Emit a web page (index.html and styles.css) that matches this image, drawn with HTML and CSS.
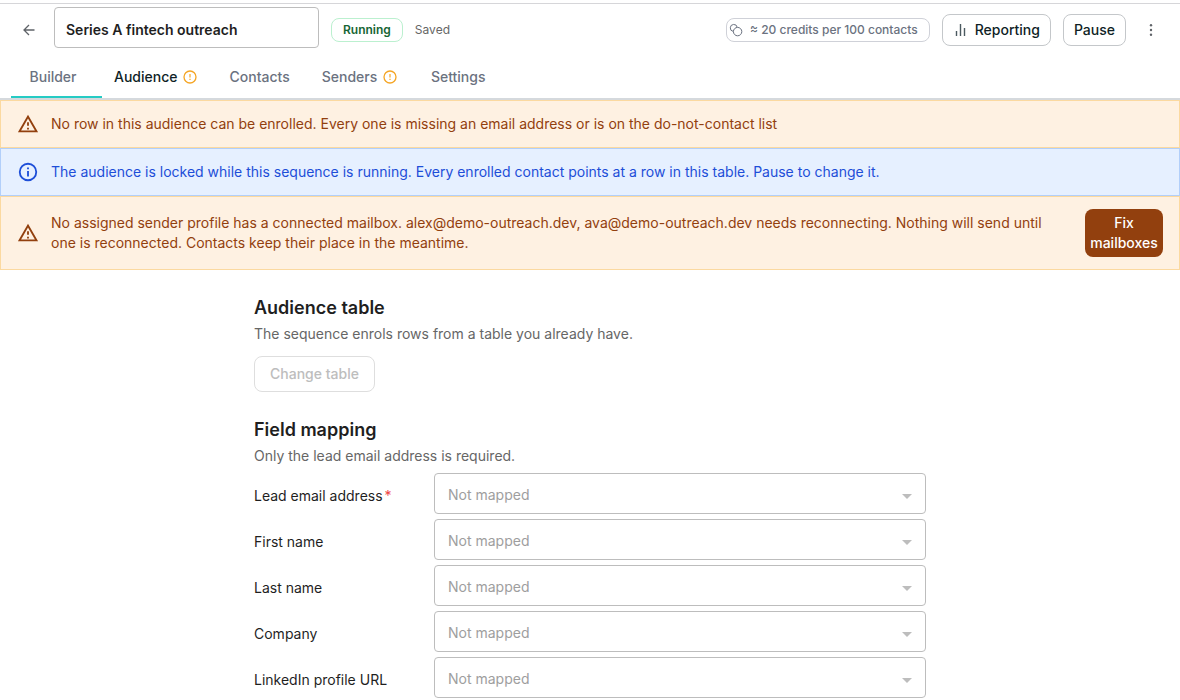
FILE: index.html
```html
<!DOCTYPE html>
<html lang="en">
<head>
<meta charset="utf-8">
<meta name="viewport" content="width=device-width, initial-scale=1">
<title>Series A fintech outreach</title>
<link rel="stylesheet" href="styles.css">
</head>
<body>
<svg class="sprite" aria-hidden="true">
  <symbol id="alert-circle" viewBox="0 0 16 16"><circle cx="8" cy="8" r="6" fill="none" stroke="currentColor" stroke-width="1.3"/><path d="M8 5v3.6M8 9.8v1.3" fill="none" stroke="currentColor" stroke-width="1.2"/></symbol>
  <symbol id="warning" viewBox="0 0 24 24"><path fill="currentColor" d="M12 5.99 19.53 19H4.47L12 5.99M12 2 1 21h22L12 2zm1 14h-2v2h2v-2zm0-6h-2v4h2v-4z"/></symbol>
  <symbol id="caret" viewBox="0 0 24 24"><path fill="currentColor" d="m7 10 5 5 5-5z"/></symbol>
</svg>
<div class="page">
  <header class="topbar">
    <button class="icon-button" type="button" aria-label="Back">
      <svg class="icon-small" viewBox="0 0 16 16"><path d="M13.5 8H3M8 3 3 8l5 5" fill="none" stroke="currentColor" stroke-width="1.3"/></svg>
    </button>
    <input class="title-input" type="text" aria-label="Sequence name" value="Series A fintech outreach">
    <span class="chip chip-running">Running</span>
    <span class="saved">Saved</span>
    <div class="actions">
      <span class="chip chip-credits">
        <svg class="coins" viewBox="0 0 14 14"><g fill="none" stroke="currentColor"><path d="M4.2 8.4A3.5 3.5 0 1 1 8.2 4.2"/><circle cx="8.6" cy="8.6" r="4.2"/></g></svg>
        ≈ 20 credits per 100 contacts
      </span>
      <button class="button" type="button">
        <svg class="icon-small bars" viewBox="0 0 16 16"><path d="M3.5 9v5M7.5 2v12M11.5 6v8" fill="none" stroke="currentColor" stroke-width="1.4"/></svg>
        Reporting
      </button>
      <button class="button" type="button">Pause</button>
      <button class="icon-button" type="button" aria-label="More actions">
        <svg class="icon-small" viewBox="0 0 16 16" fill="currentColor"><circle cx="8" cy="3.3" r="1.2"/><circle cx="8" cy="8" r="1.2"/><circle cx="8" cy="12.7" r="1.2"/></svg>
      </button>
    </div>
  </header>

  <nav class="tabs" role="tablist" aria-label="Sequence sections">
    <button class="tab" role="tab" type="button">Builder</button>
    <button class="tab tab-active" role="tab" type="button" aria-selected="true">Audience <svg class="tab-icon"><use href="#alert-circle"/></svg></button>
    <button class="tab" role="tab" type="button">Contacts</button>
    <button class="tab" role="tab" type="button">Senders <svg class="tab-icon"><use href="#alert-circle"/></svg></button>
    <button class="tab" role="tab" type="button">Settings</button>
    <span class="tab-indicator"></span>
  </nav>

  <div class="alert alert-warning" role="alert">
    <svg class="alert-icon"><use href="#warning"/></svg>
    <p class="alert-text">No row in this audience can be enrolled. Every one is missing an email address or is on the do-not-contact list</p>
  </div>
  <div class="alert alert-info" role="status">
    <svg class="alert-icon" viewBox="0 0 24 24"><path fill="currentColor" d="M11 7h2v2h-2zm0 4h2v6h-2zm1-9a10 10 0 1 0 0 20 10 10 0 0 0 0-20zm0 18a8 8 0 1 1 0-16 8 8 0 0 1 0 16z"/></svg>
    <p class="alert-text">The audience is locked while this sequence is running. Every enrolled contact points at a row in this table. Pause to change it.</p>
  </div>
  <div class="alert alert-warning alert-tall" role="alert">
    <svg class="alert-icon"><use href="#warning"/></svg>
    <p class="alert-text">No assigned sender profile has a connected mailbox. alex@demo-outreach.dev, ava@demo-outreach.dev needs reconnecting. Nothing will send until one is reconnected. Contacts keep their place in the meantime.</p>
    <button class="fix-button" type="button">Fix mailboxes</button>
  </div>

  <main class="content">
    <section class="section">
      <h2 class="heading">Audience table</h2>
      <p class="description">The sequence enrols rows from a table you already have.</p>
      <button class="button button-change" type="button" disabled>Change table</button>
    </section>
    <section class="section">
      <h2 class="heading">Field mapping</h2>
      <p class="description">Only the lead email address is required.</p>
      <div class="fields">
        <div class="field">
          <label class="label" for="email">Lead email address<span class="required">*</span></label>
          <div class="select-box"><select class="select" id="email" disabled><option>Not mapped</option></select><svg class="caret"><use href="#caret"/></svg></div>
        </div>
        <div class="field">
          <label class="label" for="first">First name</label>
          <div class="select-box"><select class="select" id="first" disabled><option>Not mapped</option></select><svg class="caret"><use href="#caret"/></svg></div>
        </div>
        <div class="field">
          <label class="label" for="last">Last name</label>
          <div class="select-box"><select class="select" id="last" disabled><option>Not mapped</option></select><svg class="caret"><use href="#caret"/></svg></div>
        </div>
        <div class="field">
          <label class="label" for="company">Company</label>
          <div class="select-box"><select class="select" id="company" disabled><option>Not mapped</option></select><svg class="caret"><use href="#caret"/></svg></div>
        </div>
        <div class="field">
          <label class="label" for="linkedin">LinkedIn profile URL</label>
          <div class="select-box"><select class="select" id="linkedin" disabled><option>Not mapped</option></select><svg class="caret"><use href="#caret"/></svg></div>
        </div>
      </div>
    </section>
  </main>
</div>
</body>
</html>
```
FILE: styles.css
```css
* { box-sizing: border-box; }
body {
  margin: 0;
  background: #fff;
  color: #1f1f1f;
  font-family: Inter, "Liberation Sans", sans-serif;
  font-size: 14px;
  line-height: 20px;
}
button, input, select { font: inherit; color: inherit; }
p, h2 { margin: 0; }
.sprite { display: none; }
.page { margin-top: 3px; border-top: 1px solid #d6d6d9; }

.topbar {
  display: flex;
  align-items: center;
  gap: 12px;
  padding: 7px 16px 8px;
}
.icon-button {
  display: flex;
  padding: 5px;
  border: 0;
  background: none;
  color: #5f6368;
}
.icon-small { width: 16px; height: 16px; }
.title-input {
  width: 265px;
  height: 41px;
  margin-top: -4px;
  padding: 4px 11px 0;
  border: 1px solid #bdbdbd;
  border-radius: 4px;
  background: #fff;
  font-weight: 600;
}
.chip {
  display: flex;
  align-items: center;
  height: 24px;
  border: 1px solid;
  border-radius: 8px;
  font-size: 12px;
  font-weight: 500;
}
.chip-running { padding: 0 11px; border-color: #bbf0cf; color: #166534; font-weight: 600; }
.chip-credits { gap: 7px; padding: 0 11px 0 2px; border-color: #cfd1d8; color: #6b7280; }
.coins { width: 14px; height: 14px; }
.saved { color: #666; font-size: 12px; }
.actions {
  display: flex;
  align-items: center;
  gap: 12px;
  margin-left: auto;
}
.button {
  display: flex;
  align-items: center;
  justify-content: center;
  gap: 6px;
  height: 32px;
  padding: 0 10px;
  border: 1px solid #c4c7ca;
  border-radius: 8px;
  background: #fff;
  color: #0f1f26;
  font-weight: 500;
}
.bars { color: #4b5960; }

.tabs {
  position: relative;
  display: flex;
  padding: 0 8px;
  border-bottom: 2px solid #d5d9dd;
}
.tab {
  display: flex;
  align-items: center;
  justify-content: center;
  gap: 5px;
  min-width: 90px;
  height: 42px;
  padding: 0 16px;
  border: 0;
  background: none;
  color: #6b7280;
  font-weight: 500;
}
.tab-active { color: #0f1f26; }
.tab-icon { width: 16px; height: 16px; margin-right: -1px; color: #f5a524; }
.tab-indicator {
  position: absolute;
  bottom: 0;
  left: 11px;
  width: 91px;
  height: 2px;
  background: #25cbc4;
}

.alert {
  display: flex;
  align-items: center;
  gap: 12px;
  min-height: 48px;
  padding: 0 16px;
  border: 1px solid;
}
.alert-warning { background: #fef1e2; border-color: #fbd9a0; color: #92400e; }
.alert-info { background: #e6f0ff; border-color: #b2cffa; color: #1d4ed8; }
.alert-tall { min-height: 74px; }
.alert-icon { flex: none; width: 22px; height: 22px; }
.alert-text { flex: 1; }
.fix-button {
  width: 78px;
  margin-left: 22px;
  padding: 4px;
  border: 0;
  border-radius: 8px;
  background: #92400e;
  color: #fff;
  font-weight: 500;
}

.content {
  display: grid;
  gap: 24px;
  max-width: 672px;
  margin: 24px auto 0;
}
.heading { font-size: 18px; font-weight: 600; line-height: 28px; }
.description { margin-top: 2px; color: #666; }
.button-change {
  height: 36px;
  margin-top: 12px;
  padding: 0 15px;
  border-color: #dedede;
  color: #bdbdbd;
}
.fields { display: grid; gap: 5px; margin-top: 7px; }
.field {
  display: grid;
  grid-template-columns: 180px 1fr;
  align-items: center;
}
.label { padding-top: 4px; }
.required { margin-left: 2px; color: #ef4444; }
.select-box { display: grid; align-items: center; }
.select {
  grid-area: 1 / 1;
  width: 100%;
  height: 41px;
  padding: 2px 36px 0 13px;
  border: 1px solid #bdbdbd;
  border-radius: 4px;
  background: #fff;
  color: #9e9e9e;
  opacity: 1;
  appearance: none;
}
.caret {
  grid-area: 1 / 1;
  justify-self: end;
  width: 24px;
  height: 24px;
  margin: 4px 7px 0 0;
  color: #bdbdbd;
  pointer-events: none;
}
```
